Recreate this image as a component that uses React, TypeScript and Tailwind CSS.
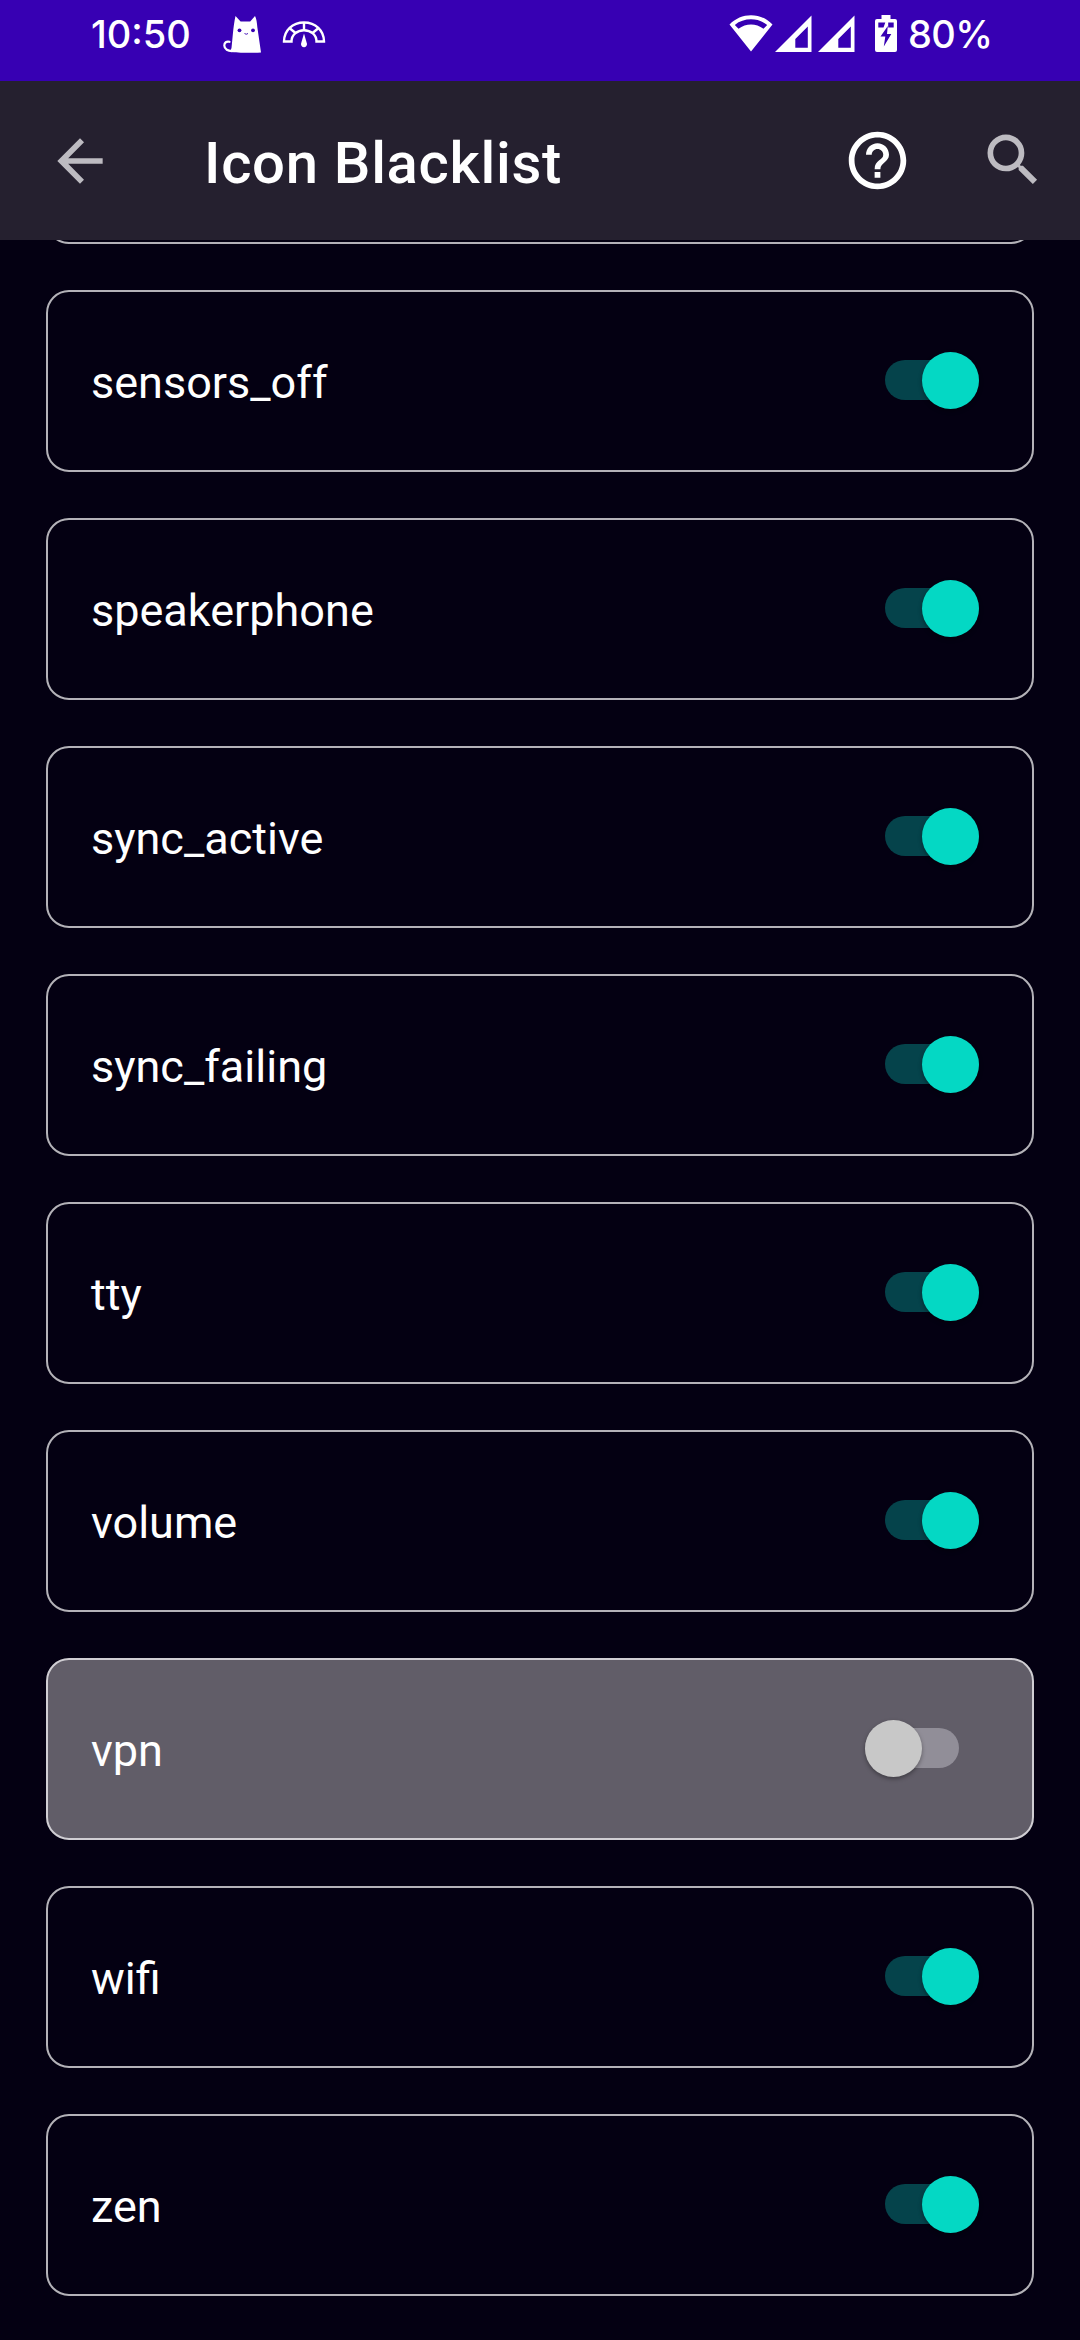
import React, { useState } from "react";
import { MdArrowBack, MdHelpOutline, MdSearch } from "react-icons/md";

const ICONS = [
  { name: "sensors_off", enabled: true },
  { name: "speakerphone", enabled: true },
  { name: "sync_active", enabled: true },
  { name: "sync_failing", enabled: true },
  { name: "tty", enabled: true },
  { name: "volume", enabled: true },
  { name: "vpn", enabled: false },
  { name: "wifi", enabled: true },
  { name: "zen", enabled: true },
];

function CatIcon() {
  return (
    <svg width="40" height="40" viewBox="0 0 40 40" className="ml-[30px]">
      <path
        d="M11 36C6 36.5 2.300 34 2.300 30.500C2.300 27.500 4.500 26 7.500 26.800"
        fill="none"
        stroke="#fff"
        strokeWidth="2.200"
        strokeLinecap="round"
      />
      <path
        d="M13.500 1L18.600 6.600H28.200L33 1C34.500 3.500 35 8 35.300 12L39 37.500C30 38 15 38 8 36.700L9.500 33C10.500 26 11 12 13.500 1Z"
        fill="#fff"
      />
      <circle cx="17.500" cy="15.300" r="1.900" fill="#3700b3" />
      <circle cx="31" cy="15.300" r="1.900" fill="#3700b3" />
      <path d="M22.500 18.500Q24.200 20 26 18.500" stroke="#3700b3" strokeWidth="0.900" fill="none" />
    </svg>
  );
}

function GaugeIcon() {
  return (
    <svg width="44" height="28" viewBox="0 0 44 28" className="ml-[20px]">
      <g fill="none" stroke="#fff" strokeWidth="2.400">
        <path d="M2 20.500C2 9.500 10.500 1.500 22 1.500C33.500 1.500 42 9.500 42 20.500H34.500C34.500 14 29 9.200 22 9.200C15 9.200 9.500 14 9.500 20.500Z" />
        <path d="M22 1.500V9.200M8 7.500L13.500 12M36 7.500L30.500 12" />
      </g>
      <path d="M22 12.500L24.900 22.500A3 3 0 1 1 19.100 22.500Z" fill="#fff" />
    </svg>
  );
}

function WifiIcon() {
  return (
    <svg width="44" height="38" viewBox="0 0 44 38">
      <path
        fill="#fff"
        fillRule="evenodd"
        d="M22 36.500L0.500 9.500C6.500 3.300 14 0.200 22 0.200C30 0.200 37.500 3.300 43.500 9.500ZM5.800 9.900L9.500 13.800C17 8 27 8 34.500 13.800L38.200 9.900C29 2.500 15 2.500 5.800 9.900Z"
      />
    </svg>
  );
}

function SignalIcon() {
  return (
    <svg width="37" height="37" viewBox="0 0 37 37">
      <path fill="#fff" fillRule="evenodd" d="M36.500 0.500V37H0ZM20.300 24V32.800H32.800V11.500Z" />
    </svg>
  );
}

function BatteryIcon() {
  return (
    <svg width="22" height="37" viewBox="0 0 22 37" className="ml-[20px]">
      <path
        fill="#fff"
        fillRule="evenodd"
        d="M6.500 0H15.500V4H20Q22 4 22 6V35Q22 37 20 37H2Q0 37 0 35V6Q0 4 2 4H6.500ZM3.300 7.500V12.500H8.500L10.300 7.500ZM13.200 7.500V12.500H18.700V7.500ZM12.800 11L5.500 21.500H10.300L8.800 31.500L16.300 19H12Z"
      />
    </svg>
  );
}

function StatusBar() {
  return (
    <div className="flex h-[81px] justify-between bg-[#3700b3] pl-[91px] pr-[89px] pt-[15px] text-white">
      <div className="flex">
        <span className="w-[101px] font-['Inter'] text-[38px] leading-[38px] font-medium whitespace-nowrap">
          10:50
        </span>
        <CatIcon />
        <div className="pt-[6px]">
          <GaugeIcon />
        </div>
      </div>
      <div className="flex">
        <WifiIcon />
        <div className="ml-[2px] flex gap-[6px]">
          <SignalIcon />
          <SignalIcon />
        </div>
        <BatteryIcon />
        <span className="ml-[11px] w-[83px] font-['Inter'] text-[38px] leading-[38px] font-medium tracking-[-0.6px] whitespace-nowrap">
          80%
        </span>
      </div>
    </div>
  );
}

function AppBar() {
  return (
    <header className="flex h-[159px] items-center bg-[#25202f] pr-[33px] pl-[46px]">
      <button>
        <MdArrowBack className="size-[68px] text-[#bdbbc1]" />
      </button>
      <h1 className="ml-[90px] flex-1 pt-[4px] font-['Roboto'] text-[58px] leading-[68px] font-medium tracking-[0.7px] text-white">
        Icon Blacklist
      </h1>
      <button>
        <MdHelpOutline className="mb-px size-[69px] text-white" />
      </button>
      <button className="ml-[67px]">
        <MdSearch className="mb-[2px] size-[68px] text-[#bdbbc1]" />
      </button>
    </header>
  );
}

function Toggle({ checked, onClick }: { checked: boolean; onClick: () => void }) {
  return (
    <button
      role="switch"
      aria-checked={checked}
      onClick={onClick}
      className={`mb-[2px] flex h-[58px] w-[94px] items-center ${checked ? "mr-[53px]" : "mr-[73px]"}`}
    >
      <span
        className={`flex h-[40px] w-full items-center rounded-full ${
          checked ? "justify-end bg-[#05434b]" : "justify-start bg-[#918e98]"
        }`}
      >
        <span
          className={`size-[57px] shrink-0 rounded-full shadow-[0_2px_4px_rgba(0,0,0,0.35)] ${
            checked ? "bg-[#04d8c4]" : "bg-[#c8c8c8]"
          }`}
        />
      </span>
    </button>
  );
}

export default function App() {
  const [items, setItems] = useState(ICONS);

  const toggle = (name: string) =>
    setItems(items.map((i) => (i.name === name ? { ...i, enabled: !i.enabled } : i)));

  return (
    <div className="flex h-[2340px] w-[1080px] flex-col overflow-hidden bg-[#040012]">
      <StatusBar />
      <AppBar />
      <main className="flex min-h-0 flex-1 flex-col justify-end gap-[46px] overflow-hidden px-[46px] pb-[44px]">
        {/* Card scrolled under the app bar */}
        <div className="h-[182px] shrink-0 rounded-[23px] border-2 border-[#b4b2b8]" />
        {items.map((item) => (
          <div
            key={item.name}
            className={`flex h-[182px] shrink-0 items-center justify-between rounded-[23px] border-2 pl-[43px] ${
              item.enabled ? "border-[#b4b2b8]" : "border-[#d0ced3] bg-[#615d68]"
            }`}
          >
            <span className="pt-[3px] font-['Roboto'] text-[45px] leading-[54px] text-white">
              {item.name}
            </span>
            <Toggle checked={item.enabled} onClick={() => toggle(item.name)} />
          </div>
        ))}
      </main>
    </div>
  );
}
